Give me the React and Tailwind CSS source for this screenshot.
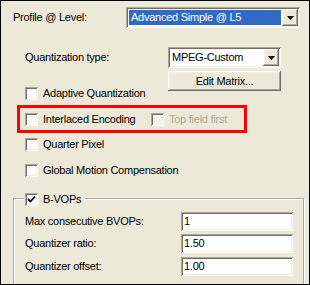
const sunken =
  "shadow-[inset_1px_1px_0_#aca899,inset_-1px_-1px_0_#ffffff,inset_2px_2px_0_#716f64,inset_-2px_-2px_0_#f1efe2]";
const raised =
  "shadow-[inset_-1px_-1px_0_#716f64,inset_1px_1px_0_#ffffff,inset_-2px_-2px_0_#aca899,inset_2px_2px_0_#f1efe2]";

function Arrow() {
  return (
    <svg width="7" height="4" viewBox="0 0 7 4">
      <polygon points="0,0 7,0 3.5,4" fill="#000" />
    </svg>
  );
}

function DropButton() {
  return (
    <div className={`w-[16px] h-full flex items-center justify-center bg-[#ece9d8] ${raised}`}>
      <Arrow />
    </div>
  );
}

function Check({ checked = false, disabled = false }) {
  return (
    <div
      className={`w-[13px] h-[13px] shrink-0 flex items-center justify-center ${
        disabled ? "bg-[#f5f4ee]" : "bg-white"
      } ${sunken}`}
    >
      {checked && (
        <svg width="9" height="9" viewBox="0 0 9 9">
          <path d="M1 4 L3.5 6.5 L8 1.5" stroke="#000" strokeWidth="1.8" fill="none" />
        </svg>
      )}
    </div>
  );
}

function CheckRow({ label, checked, disabled, className = "" }) {
  return (
    <div className={`flex items-center gap-[5px] h-[13px] ${className}`}>
      <Check checked={checked} disabled={disabled} />
      <span className={`leading-[13px] whitespace-nowrap ${disabled ? "text-[#aca899]" : ""}`}>{label}</span>
    </div>
  );
}

function Field({ value }) {
  return (
    <div className={`w-[112px] h-[19px] bg-white flex items-center pl-[3px] ${sunken}`}>
      <span className="leading-none">{value}</span>
    </div>
  );
}

export default function App() {
  return (
    <div className="relative w-[310px] h-[285px] overflow-hidden border border-black bg-[#ece9d8] text-black text-[11px] tracking-[-0.25px] font-['Liberation_Sans',Arial,sans-serif]">
      <div className="pl-[12px] pt-[6px]">
        {/* Profile row */}
        <div className="flex items-center h-[21px]">
          <span className="w-[113px] whitespace-nowrap">Profile @ Level:</span>
          <div className={`w-[174px] h-[21px] bg-white flex p-[2px] ${sunken}`}>
            <div className="flex-1 p-[1px]">
              <div className="h-full bg-[#316ac5] text-white flex items-center pl-[2px] whitespace-nowrap">
                Advanced Simple @ L5
              </div>
            </div>
            <DropButton />
          </div>
        </div>

        {/* Quantization row */}
        <div className="flex items-start mt-[19px]">
          <div className="w-[155px] pl-[12px] flex flex-col">
            <div className="h-[21px] flex items-center whitespace-nowrap">Quantization type:</div>
            <CheckRow label="Adaptive Quantization" className="mt-[19px]" />
          </div>
          <div className="flex flex-col w-[113px]">
            <div className={`h-[21px] bg-white flex p-[2px] ${sunken}`}>
              <div className="flex-1 flex items-center pl-[2px] whitespace-nowrap">MPEG-Custom</div>
              <DropButton />
            </div>
            <div className={`mt-[3px] h-[20px] flex items-center justify-center bg-[#ece9d8] ${raised}`}>
              Edit Matrix...
            </div>
          </div>
        </div>

        <div className="pl-[12px]">
          <div className="flex items-center mt-[13px]">
            <CheckRow label="Interlaced Encoding" className="w-[126px]" />
            <CheckRow label="Top field first" disabled />
          </div>
          <CheckRow label="Quarter Pixel" className="mt-[12px]" />
          <CheckRow label="Global Motion Compensation" className="mt-[13px]" />
        </div>

        {/* B-VOPs group */}
        <div className="relative mt-[21px] w-[291px] h-[100px] border border-[#aca899] shadow-[inset_1px_1px_0_#ffffff,1px_1px_0_#ffffff] pl-[11px] pt-[13px]">
          <div className="absolute left-[10px] top-[-6px] bg-[#ece9d8] pl-[1px] pr-[4px]">
            <CheckRow label="B-VOPs" checked />
          </div>
          <div className="flex items-center">
            <span className="w-[156px] whitespace-nowrap">Max consecutive BVOPs:</span>
            <Field value="1" />
          </div>
          <div className="flex items-center mt-[3px]">
            <span className="w-[156px] whitespace-nowrap">Quantizer ratio:</span>
            <Field value="1.50" />
          </div>
          <div className="flex items-center mt-[4px]">
            <span className="w-[156px] whitespace-nowrap">Quantizer offset:</span>
            <Field value="1.00" />
          </div>
        </div>
      </div>

      {/* highlight annotation */}
      <div className="absolute left-[16px] top-[104px] w-[230px] h-[28px] border-[3px] border-[#ff0000]" />
    </div>
  );
}
